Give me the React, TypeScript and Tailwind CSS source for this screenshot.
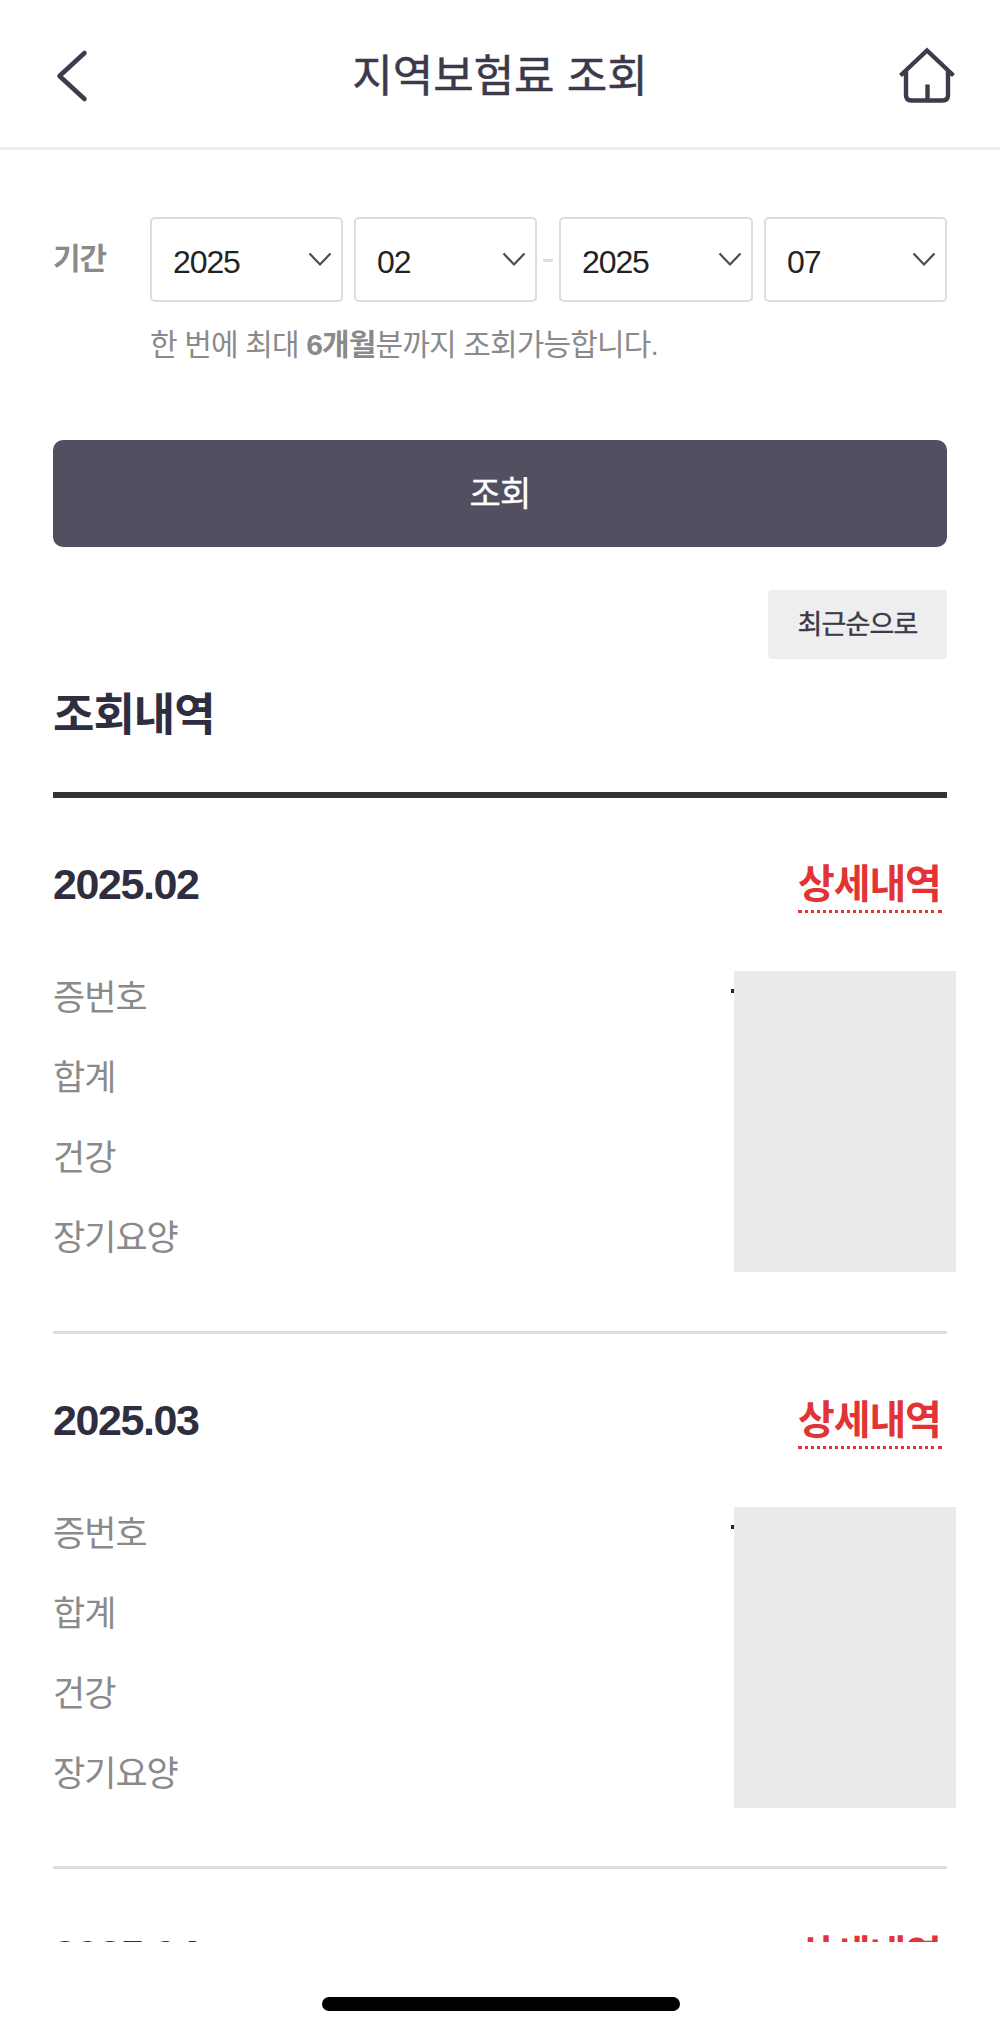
import React from "react";

const labels = ["증번호", "합계", "건강", "장기요양"];

function Select({ value, width }: { value: string; width: string }) {
  return (
    <button className={`flex h-[85px] shrink-0 items-center justify-between rounded-[5px] border-2 border-[#dcdcdc] pl-[21px] pr-[9px] ${width}`}>
      <span className="pt-[4px] text-[32px] leading-none tracking-[-1.1px] text-[#222]">{value}</span>
      <svg className="mb-[1px] h-[15px] w-[24px]" viewBox="0 0 24 15" fill="none" stroke="#4a4a56" strokeWidth="2.2">
        <path d="M1.5 1.5 12 12.5 22.5 1.5" />
      </svg>
    </button>
  );
}

function Record({ month }: { month: string }) {
  return (
    <section className="h-[535.5px] shrink-0 border-b-[3px] border-[#dedede] pt-[62px]">
      <div className="flex h-[54px] items-start justify-between pr-[5px]">
        <h3 className="pt-[2px] text-[43px] font-bold leading-[44px] tracking-[-1.4px] text-[#2f2d40]">{month}</h3>
        <a className="h-[53px] w-[144px] whitespace-nowrap border-b-[3px] border-dotted border-[#e23434] pt-[2px] text-[40px] font-bold leading-[44px] tracking-[-1.1px] text-[#e23434]">
          상세내역
        </a>
      </div>
      <div className="mt-[57px] flex h-[302px] justify-between">
        <ul className="pt-[2px]">
          {labels.map((label) => (
            <li key={label} className="h-20 text-[35px] leading-[50px] tracking-[-1px] text-[#8a8a8a]">{label}</li>
          ))}
        </ul>
        <div className="-mr-[9px] flex">
          <i className="mt-[18px] h-[4px] w-[3px] bg-[#222]" />
          <div className="h-[301px] w-[222px] bg-[#ebebeb]" />
        </div>
      </div>
    </section>
  );
}

export default function App() {
  return (
    <div className="flex h-[2032px] w-[1000px] flex-col bg-white font-['Liberation_Sans','Noto_Sans_CJK_KR',sans-serif]">
      <header className="flex h-[150px] shrink-0 items-center justify-between border-b-[3px] border-[#ededed] px-[45px]">
        <svg className="mt-[4px] h-[54px] w-[56px]" viewBox="0 0 56 54" fill="none" stroke="#3d3b4c" strokeWidth="4.6" strokeLinecap="round" strokeLinejoin="round">
          <path d="M39.5 4 14.5 27 39.5 50" />
        </svg>
        <h1 className="pt-[7px] text-[44px] leading-none text-[#3b394a] [-webkit-text-stroke:0.5px_#3b394a]">지역보험료 조회</h1>
        <svg className="mt-[2px] h-[56px] w-[56px]" viewBox="0 0 56 56" fill="none" stroke="#3d3b4c" strokeWidth="4.4">
          <path d="M1.500 28.500 28 3.500 54.500 28.500M7 24V48Q7 53.500 12.500 53.500H43.500Q49 53.500 49 48V24M28.500 37.500V53" />
        </svg>
      </header>
      <main className="flex h-[1792px] shrink-0 flex-col overflow-hidden px-[53px]">
        <div className="flex shrink-0 pt-[67px]">
          <span className="w-[97px] shrink-0 text-[30px] font-bold leading-[84px] tracking-[-1px] text-[#8a8a8a]">기간</span>
          <div>
            <div className="flex items-center">
              <Select value="2025" width="w-[193px]" />
              <div className="w-[11px]" />
              <Select value="02" width="w-[183px]" />
              <span className="mx-[6px] mt-[2px] h-[3px] w-[10px] bg-[#dedede]" />
              <Select value="2025" width="w-[194px]" />
              <div className="w-[11px]" />
              <Select value="07" width="w-[183px]" />
            </div>
            <p className="mt-[18px] text-[30px] leading-[50px] tracking-[-0.85px] text-[#8a8a8a]">
              한 번에 최대 <b>6개월</b>분까지 조회가능합니다.
            </p>
          </div>
        </div>
        <button className="mt-[70px] h-[107px] shrink-0 rounded-[10px] bg-[#514f60] pt-[1px] text-[34px] tracking-[-0.8px] text-white [-webkit-text-stroke:0.4px_white]">조회</button>
        <button className="mt-[43px] h-[69px] w-[179px] shrink-0 self-end rounded-[4px] bg-[#eee] pt-[2px] text-[27px] tracking-[-0.8px] text-[#3b394a] [-webkit-text-stroke:0.4px_#3b394a]">최근순으로</button>
        <h2 className="h-[133px] shrink-0 pt-[27px] text-[45px] font-bold leading-[60px] tracking-[-1px] text-[#2f2d40]">조회내역</h2>
        <div className="h-[6px] shrink-0 bg-[#333]" />
        <Record month="2025.02" />
        <Record month="2025.03" />
        <Record month="2025.04" />
      </main>
      <div className="flex h-[90px] justify-center pl-[1px] pt-[55px]">
        <div className="h-[14px] w-[358px] rounded-full bg-black" />
      </div>
    </div>
  );
}
